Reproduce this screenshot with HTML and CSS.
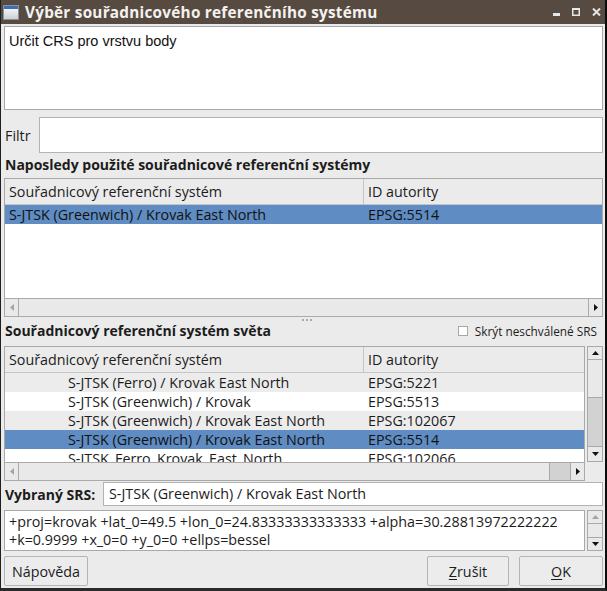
FILE: index.html
```html
<!DOCTYPE html>
<html lang="cs">
<head>
<meta charset="utf-8">
<title>Výběr souřadnicového referenčního systému</title>
<link rel="stylesheet" href="styles.css">
</head>
<body>
<div class="window">
  <div class="titlebar">
    <svg class="appicon" width="16" height="15" viewBox="0 0 16 15">
      <defs>
        <linearGradient id="g" x1="0" y1="0" x2="0" y2="1">
          <stop offset="0" stop-color="#ffffff"/>
          <stop offset="1" stop-color="#c9ced6"/>
        </linearGradient>
      </defs>
      <rect x="0.5" y="0.5" width="15" height="14" fill="url(#g)" stroke="#8a9099"/>
      <rect x="1" y="1" width="14" height="3" fill="#3d6fb6"/>
    </svg>
    <span class="title">Výběr souřadnicového referenčního systému</span>
    <div class="wm">
      <svg width="7" height="3" viewBox="0 0 7 3"><rect width="7" height="3" fill="#e6e6e6"/></svg>
      <svg width="8" height="8" viewBox="0 0 8 8"><rect x="0.75" y="0.75" width="6.5" height="6.5" fill="none" stroke="#e6e6e6" stroke-width="1.5"/><rect x="0" y="0" width="8" height="2" fill="#e6e6e6"/></svg>
      <svg width="9" height="8" viewBox="0 0 9 8"><path d="M1 0.5 L8 7.5 M8 0.5 L1 7.5" stroke="#e6e6e6" stroke-width="2"/></svg>
    </div>
  </div>
  <div class="content">
    <div class="desc">Určit CRS pro vrstvu body</div>
    <div class="filter-row">
      <span class="filter-label">Filtr</span>
      <div class="field"></div>
    </div>
    <div class="heading">Naposledy použité souřadnicové referenční systémy</div>
    <div class="frame recent">
      <div class="grid">
        <div class="thead"><div class="c1">Souřadnicový referenční systém</div><div class="c2">ID autority</div></div>
        <div class="row sel"><div class="c1">S-JTSK (Greenwich) / Krovak East North</div><div class="c2">EPSG:5514</div></div>
      </div>
      <div class="hscroll">
        <div class="arr"><svg width="4" height="7" viewBox="0 0 4 7"><path d="M4 0 L0 3.5 L4 7 Z" fill="#a5a5a5"/></svg></div>
        <div class="track"></div>
        <div class="arr"><svg width="4" height="7" viewBox="0 0 4 7"><path d="M0 0 L4 3.5 L0 7 Z" fill="#111"/></svg></div>
      </div>
    </div>
    <div class="splitter"><span class="dots"><i></i><i></i><i></i></span></div>
    <div class="heading-row">
      <div class="heading">Souřadnicový referenční systém světa</div>
      <label class="check"><span class="box"></span>Skrýt neschválené SRS</label>
    </div>
    <div class="world">
      <div class="world-main">
        <div class="frame wframe">
          <div class="grid">
            <div class="thead"><div class="c1">Souřadnicový referenční systém</div><div class="c2">ID autority</div></div>
            <div class="row alt"><div class="c1 ind">S-JTSK (Ferro) / Krovak East North</div><div class="c2">EPSG:5221</div></div>
            <div class="row"><div class="c1 ind">S-JTSK (Greenwich) / Krovak</div><div class="c2">EPSG:5513</div></div>
            <div class="row alt"><div class="c1 ind">S-JTSK (Greenwich) / Krovak East North</div><div class="c2">EPSG:102067</div></div>
            <div class="row sel"><div class="c1 ind">S-JTSK (Greenwich) / Krovak East North</div><div class="c2">EPSG:5514</div></div>
            <div class="row"><div class="c1 ind">S-JTSK_Ferro_Krovak_East_North</div><div class="c2">EPSG:102066</div></div>
          </div>
        </div>
        <div class="hscroll2">
          <div class="arr"><svg width="4" height="7" viewBox="0 0 4 7"><path d="M4 0 L0 3.5 L4 7 Z" fill="#a5a5a5"/></svg></div>
          <div class="track"><div class="hthumb"></div></div>
          <div class="arr"><svg width="4" height="7" viewBox="0 0 4 7"><path d="M0 0 L4 3.5 L0 7 Z" fill="#111"/></svg></div>
        </div>
      </div>
      <div class="vscroll">
        <div class="varr"><svg width="7" height="4" viewBox="0 0 7 4"><path d="M0 4 L3.5 0 L7 4 Z" fill="#111"/></svg></div>
        <div class="vtrack"><div class="vthumb"></div></div>
        <div class="varr"><svg width="7" height="4" viewBox="0 0 7 4"><path d="M0 0 L3.5 4 L7 0 Z" fill="#111"/></svg></div>
      </div>
    </div>
    <div class="selected-row">
      <span class="sel-label">Vybraný SRS:</span>
      <div class="field sel-field">S-JTSK (Greenwich) / Krovak East North</div>
    </div>
    <div class="proj-row">
      <div class="proj">+proj=krovak +lat_0=49.5 +lon_0=24.83333333333333 +alpha=30.28813972222222<br>+k=0.9999 +x_0=0 +y_0=0 +ellps=bessel</div>
      <div class="vscroll small">
        <div class="varr"><svg width="7" height="4" viewBox="0 0 7 4"><path d="M0 4 L3.5 0 L7 4 Z" fill="#a5a5a5"/></svg></div>
        <div class="vtrack"></div>
        <div class="varr"><svg width="7" height="4" viewBox="0 0 7 4"><path d="M0 0 L3.5 4 L7 0 Z" fill="#111"/></svg></div>
      </div>
    </div>
    <div class="buttons">
      <div class="btn help">Nápověda</div>
      <div class="spacer"></div>
      <div class="btn cancel"><u>Z</u>rušit</div>
      <div class="btn ok"><u>O</u>K</div>
    </div>
  </div>
</div>
</body>
</html>
```
FILE: styles.css
```css
* { box-sizing: border-box; margin: 0; padding: 0; }
html, body { width: 607px; height: 591px; overflow: hidden; }
body {
  background: #ebebeb;
  font-family: "Open Sans", "DejaVu Sans", sans-serif;
  font-size: 14.3px;
  color: #1c1c1c;
}
.window {
  width: 607px;
  height: 591px;
  display: flex;
  flex-direction: column;
  border-left: 1px solid #1f1f1f;
  border-right: 2px solid #0c0c0c;
  border-bottom: 3px solid #2a2a2a;
  background: #ebebeb;
}
.titlebar {
  height: 24px;
  flex: none;
  background: #574b41;
  display: flex;
  align-items: center;
  padding-left: 2px;
  color: #fff;
}
.appicon { flex: none; margin-right: 6px; }
.title {
  font-weight: 700;
  font-size: 15.3px;
  letter-spacing: 0.25px;
  color: #f4f2f0;
}
.wm {
  margin-left: auto;
  display: flex;
  align-items: center;
  gap: 12px;
  padding-right: 4px;
}
.wm svg:first-child { margin-top: 5px; }
.content {
  flex: 1;
  display: flex;
  flex-direction: column;
  padding: 2px 2px 0 3px;
}
.desc {
  height: 84px;
  background: #fff;
  border: 1px solid #a9a9a9;
  font-family: "Liberation Sans", Arial, sans-serif;
  font-size: 14.5px;
  padding: 6px 4px;
  color: #111;
}
.filter-row {
  margin-top: 7px;
  height: 36px;
  display: flex;
  align-items: center;
}
.filter-label { width: 35px; flex: none; padding-left: 1px; }
.field {
  flex: 1;
  height: 100%;
  background: #fff;
  border: 1px solid #b3b3b3;
}
.heading {
  font-weight: 700;
  font-size: 14px;
  line-height: 18px;
  padding-left: 1px;
}
.content > .heading { margin-top: 3px; height: 18px; }
.frame {
  border: 1px solid #a9a9a9;
  background: #fff;
  display: flex;
  flex-direction: column;
}
.recent { margin-top: 4px; height: 139px; }
.grid { flex: 1; overflow: hidden; }
.thead {
  height: 26px;
  display: flex;
  background: #ebebeb;
  border-bottom: 1px solid #c4c4c4;
}
.thead .c1 { border-right: 1px solid #c4c4c4; }
.c1, .c2 { line-height: 26px; padding-left: 4px; white-space: nowrap; overflow: hidden; }
.c1 { width: 359px; flex: none; }
.c2 { flex: 1; }
.row { height: 19px; display: flex; }
.row .c1, .row .c2 { line-height: 19px; }
.row.alt { background: #ececec; }
.row.sel { background: #5f8cc2; color: #111; }
.ind { padding-left: 63px; }
.hscroll, .hscroll2 {
  height: 18px;
  flex: none;
  display: flex;
  background: #e9e9e9;
  border-top: 1px solid #a9a9a9;
}
.arr {
  width: 14px;
  flex: none;
  display: flex;
  align-items: center;
  justify-content: center;
  border-right: 1px solid #a9a9a9;
}
.arr:last-child { border-right: none; border-left: 1px solid #a9a9a9; }
.track { flex: 1; display: flex; justify-content: flex-end; }
.splitter {
  height: 5px;
  flex: none;
  display: flex;
  justify-content: center;
  align-items: center;
}
.dots { display: flex; gap: 2px; margin-left: 6px; }
.dots i { width: 2px; height: 2px; background: #aaaaaa; display: block; }
.heading-row {
  height: 17px;
  flex: none;
  display: flex;
  align-items: center;
  justify-content: space-between;
}
.check {
  display: flex;
  align-items: center;
  font-size: 11.8px;
  padding-right: 6px;
}
.box {
  width: 10px;
  height: 10px;
  background: #fff;
  border: 1px solid #a7a7a7;
  margin-right: 7px;
}
.world {
  margin-top: 7px;
  height: 134px;
  flex: none;
  display: flex;
  gap: 2px;
}
.world-main {
  flex: 1;
  display: flex;
  flex-direction: column;
}
.wframe { height: 116px; border-bottom: none; }
.hscroll2 {
  border: 1px solid #a9a9a9;
  height: 19px;
}
.hthumb {
  width: 21px;
  background: #d2d2d2;
  border-left: 1px solid #a9a9a9;
}
.vscroll {
  width: 16px;
  flex: none;
  height: 116px;
  display: flex;
  flex-direction: column;
  border: 1px solid #a9a9a9;
  background: #e9e9e9;
}
.varr {
  height: 13px;
  flex: none;
  display: flex;
  align-items: center;
  justify-content: center;
  border-bottom: 1px solid #a9a9a9;
}
.varr:last-child { border-bottom: none; border-top: 1px solid #a9a9a9; height: 15px; }
.vtrack { flex: 1; display: flex; flex-direction: column; justify-content: flex-end; }
.vthumb { height: 49px; background: #d2d2d2; border-top: 1px solid #a9a9a9; }
.selected-row {
  margin-top: 2px;
  height: 24px;
  flex: none;
  display: flex;
  align-items: center;
}
.sel-label { font-weight: 700; font-size: 14px; width: 99px; flex: none; padding-left: 1px; }
.sel-field { line-height: 22px; padding-left: 5px; }
.proj-row {
  margin-top: 4px;
  height: 41px;
  flex: none;
  display: flex;
  gap: 2px;
}
.proj {
  flex: 1;
  background: #fff;
  border: 1px solid #a9a9a9;
  line-height: 18px;
  padding: 2px 4px 0;
  white-space: nowrap;
  overflow: hidden;
}
.vscroll.small { height: 41px; }
.vscroll.small .varr { height: 13px; }
.buttons {
  margin-top: 5px;
  height: 30px;
  flex: none;
  display: flex;
  gap: 10px;
}
.spacer { flex: 1; }
.btn {
  height: 30px;
  border: 1px solid #b4b4b4;
  border-radius: 2px;
  background: #ececec;
  display: flex;
  align-items: center;
  justify-content: center;
}
.help { width: 84px; }
.cancel { width: 82px; }
.ok { width: 84px; }
.btn u { text-decoration-thickness: 1px; text-underline-offset: 2px; }
```
